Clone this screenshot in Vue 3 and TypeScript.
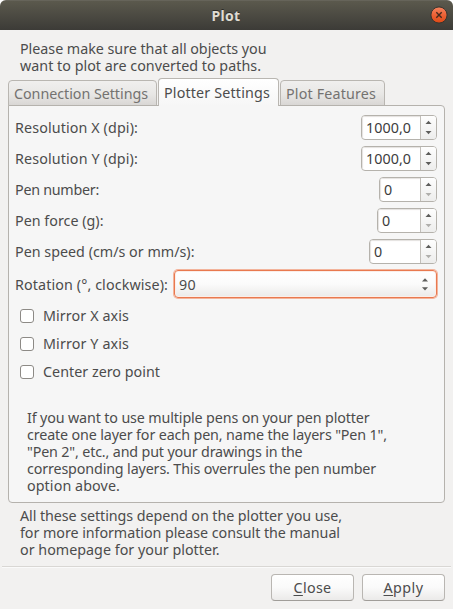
<script setup lang="ts">
import { ref } from 'vue'

interface Line { text: string; width: number }
interface SpinField { label: string; labelWidth: number; value: string; valueWidth: number; size: string; atMinimum: boolean }

const intro: Line[] = [
  { text: 'Please make sure that all objects you', width: 246.5 },
  { text: 'want to plot are converted to paths.', width: 241 },
]
const tabs: (Line & { active: boolean })[] = [
  { text: 'Connection Settings', width: 134, active: false },
  { text: 'Plotter Settings', width: 106, active: true },
  { text: 'Plot Features', width: 90, active: false },
]
const fields: SpinField[] = [
  { label: 'Resolution X (dpi):', labelWidth: 123, value: '1000,0', valueWidth: 45, size: 'wide', atMinimum: false },
  { label: 'Resolution Y (dpi):', labelWidth: 123, value: '1000,0', valueWidth: 45, size: 'wide', atMinimum: false },
  { label: 'Pen number:', labelWidth: 84, value: '0', valueWidth: 8, size: 'narrow', atMinimum: true },
  { label: 'Pen force (g):', labelWidth: 88.5, value: '0', valueWidth: 8, size: 'small', atMinimum: true },
  { label: 'Pen speed (cm/s or mm/s):', labelWidth: 179.5, value: '0', valueWidth: 8, size: 'medium', atMinimum: true },
]
const options = ref([
  { text: 'Mirror X axis', width: 86, checked: false },
  { text: 'Mirror Y axis', width: 86, checked: false },
  { text: 'Center zero point', width: 117, checked: false },
])
const help: Line[] = [
  { text: 'If you want to use multiple pens on your pen plotter', width: 342.5 },
  { text: 'create one layer for each pen, name the layers "Pen 1",', width: 360 },
  { text: '"Pen 2", etc., and put your drawings in the', width: 275.5 },
  { text: 'corresponding layers. This overrules the pen number', width: 349 },
  { text: 'option above.', width: 93 },
]
const footer: Line[] = [
  { text: 'All these settings depend on the plotter you use,', width: 322 },
  { text: 'for more information please consult the manual', width: 320 },
  { text: 'or homepage for your plotter.', width: 199.5 },
]

// Tracks a line of text out or in so that it sets to a given measure.
const vFit = {
  mounted(el: HTMLElement, binding: { value: number }) {
    const count = (el.textContent ?? '').length
    const natural = el.getBoundingClientRect().width
    el.style.letterSpacing = `${((binding.value - natural) / count).toFixed(3)}px`
  },
}
</script>

<template>
  <main class="window">
    <header class="titlebar">
      <span v-fit="29" class="title">Plot</span>
      <button class="close" aria-label="Close window">
        <svg width="18" height="18" viewBox="0 0 18 18">
          <defs>
            <linearGradient id="orb" x1="0" y1="0" x2="0" y2="1">
              <stop offset="0" stop-color="#f58460" />
              <stop offset=".5" stop-color="#ed6236" />
              <stop offset="1" stop-color="#dd4814" />
            </linearGradient>
          </defs>
          <circle cx="9" cy="9" r="8.1" fill="url(#orb)" stroke="#35342f" stroke-width="1" />
          <path d="M6.3 6.3l5.4 5.4M11.7 6.3l-5.4 5.4" stroke="#46291d" stroke-width="1.4" />
        </svg>
      </button>
    </header>

    <p class="intro">
      <span v-for="line in intro" :key="line.text" class="line"><span v-fit="line.width" class="fit">{{ line.text }}</span></span>
    </p>

    <nav class="tabs">
      <button v-for="tab in tabs" :key="tab.text" class="tab" :class="{ active: tab.active }">
        <span v-fit="tab.width" class="fit">{{ tab.text }}</span>
      </button>
    </nav>

    <section class="panel">
      <div class="fields">
        <div v-for="field in fields" :key="field.label" class="field">
          <span v-fit="field.labelWidth" class="fit">{{ field.label }}</span>
          <div class="spin" :class="field.size">
            <div class="value"><span v-fit="field.valueWidth" class="fit">{{ field.value }}</span></div>
            <svg class="steps" width="15" height="23" viewBox="0 0 15 23">
              <path d="M4.5 8h6L7.5 4.7z" fill="#5d5d5b" />
              <path d="M4.5 15h6l-3 3.3z" :fill="field.atMinimum ? '#b0afac' : '#5d5d5b'" />
            </svg>
          </div>
        </div>
      </div>
      <div class="rotation">
        <span v-fit="153" class="fit">Rotation (°, clockwise):</span>
        <div class="combo">
          <span v-fit="17" class="fit">90</span>
          <svg width="8" height="14" viewBox="0 0 8 14">
            <path d="M1 4.6h6L4 1.3z" fill="#5d5d5b" />
            <path d="M1 10.2h6l-3 3.3z" fill="#5d5d5b" />
          </svg>
        </div>
      </div>
      <div class="options">
        <label v-for="option in options" :key="option.text" class="option">
          <input v-model="option.checked" type="checkbox" class="check">
          <span v-fit="option.width" class="fit">{{ option.text }}</span>
        </label>
      </div>
      <p class="help">
        <span v-for="line in help" :key="line.text" class="line"><span v-fit="line.width" class="fit">{{ line.text }}</span></span>
      </p>
    </section>

    <p class="footer">
      <span v-for="line in footer" :key="line.text" class="line"><span v-fit="line.width" class="fit">{{ line.text }}</span></span>
    </p>

    <div class="actions">
      <button class="action"><span v-fit="38" class="fit"><u>C</u>lose</span></button>
      <button class="action"><span v-fit="40" class="fit"><u>A</u>pply</span></button>
    </div>
  </main>
</template>

<style>
body { background: #fff; }
</style>

<style scoped>
* { box-sizing: border-box; }
.window {
  width: 453px;
  height: 609px;
  display: flex;
  flex-direction: column;
  overflow: hidden;
  border-radius: 6px 6px 0 0;
  background: #f2f1f0;
  color: #4c4c4c;
  font: 14.3px/17px "Noto Sans", "Open Sans", sans-serif;
}
button { font: inherit; color: inherit; padding: 0; margin: 0; }
p { margin: 0; }
.line { display: block; height: 17px; white-space: nowrap; }
.fit { display: inline-block; white-space: nowrap; flex: none; }

.titlebar {
  display: grid;
  grid-template-columns: 1fr auto 1fr;
  align-items: center;
  flex: none;
  height: 30px;
  padding: 0 5px 1px 4px;
  background: linear-gradient(#5b594d, #3c3b37);
  border-top: 1px solid #66645a;
}
.title {
  grid-column: 2;
  color: #dfdbd2;
  font-weight: 700;
  font-size: 14px;
  text-shadow: 0 -1px #2c2b28;
}
.close { justify-self: end; height: 18px; border: 0; background: none; }
.close svg { display: block; }

.intro { padding: 10px 20px 0; height: 48px; flex: none; }

.tabs {
  display: flex;
  align-items: flex-end;
  height: 28px;
  flex: none;
  padding-left: 8px;
  margin-bottom: -1px;
}
.tab {
  display: flex;
  align-items: flex-start;
  height: 26px;
  padding: 4px 0 0 5px;
  width: 149px;
  border: 1px solid #b9b6b1;
  border-radius: 4px 4px 0 0;
  background: linear-gradient(#f0efee, #e8e7e5 55%, #d9d7d5);
  color: #747270;
}
.tab.active {
  position: relative;
  height: 28px;
  width: 121px;
  padding: 5px 0 0 5px;
  margin: 0 1px;
  border-bottom: 0;
  background: linear-gradient(#fff, #f6f6f6);
  color: #4c4c4c;
}
.tab:last-child { width: 105px; padding-left: 5px; }

.panel {
  height: 398px;
  flex: none;
  margin: 0 8px;
  padding: 9px 7px 0 6px;
  border: 1px solid #b5b2ad;
  border-radius: 0 4px 4px 4px;
  background: #f6f6f6;
}
.fields { display: flex; flex-direction: column; gap: 6px; }
.field { display: flex; align-items: center; justify-content: space-between; height: 25px; }
.spin {
  display: flex;
  height: 25px;
  overflow: hidden;
  border: 1px solid #b5b2ac;
  border-radius: 4px;
  background: #fff;
  color: #3c3c3c;
}
.wide { width: 76px; }
.narrow { width: 58px; }
.small { width: 60px; }
.medium { width: 68px; }
.value {
  flex: 1;
  padding: 3px 0 0 4px;
  border-right: 1px solid #c2bfba;
  box-shadow: inset 1px 1px 1px #e4e2df;
}
.steps { flex: none; background: linear-gradient(#fefefe, #ededec); }

.rotation { display: flex; align-items: center; justify-content: space-between; height: 30px; margin-top: 5px; }
.combo {
  display: flex;
  align-items: center;
  justify-content: space-between;
  width: 263px;
  height: 28px;
  padding: 0 7px 0 4px;
  border: 1px solid #e9794f;
  border-radius: 4px;
  background: linear-gradient(#fff, #fbfbfb 50%, #ebeae9);
  box-shadow: 0 0 0 1px #f3b49c, inset 0 0 0 1px #fbeee9;
}

.options { display: flex; flex-direction: column; gap: 11px; margin-top: 8px; padding-left: 5px; }
.option { display: flex; align-items: center; gap: 9px; height: 17px; }
.check {
  appearance: none;
  width: 14px;
  height: 14px;
  margin: 0;
  border: 1px solid #8d8a86;
  border-radius: 3px;
  background: #fff;
}

.help { margin-top: 29px; padding-left: 12px; }

.footer { flex: none; height: 63px; padding: 4px 20px 0; }
.actions {
  display: flex;
  justify-content: flex-end;
  gap: 8px;
  flex: none;
  margin: 0 2px;
  padding: 7px 6px 0 0;
  border-top: 1px solid #d9d7d4;
  box-shadow: inset 0 1px #fafafa;
}
.action {
  display: flex;
  justify-content: center;
  width: 83px;
  height: 27px;
  padding-top: 4px;
  border: 1px solid #b9b6b2;
  border-bottom-color: #a09d99;
  border-radius: 4px;
  background: linear-gradient(#fff, #fafafa 50%, #ebeae9);
}
.action u { text-underline-offset: 2px; text-decoration-thickness: 1px; }
</style>
